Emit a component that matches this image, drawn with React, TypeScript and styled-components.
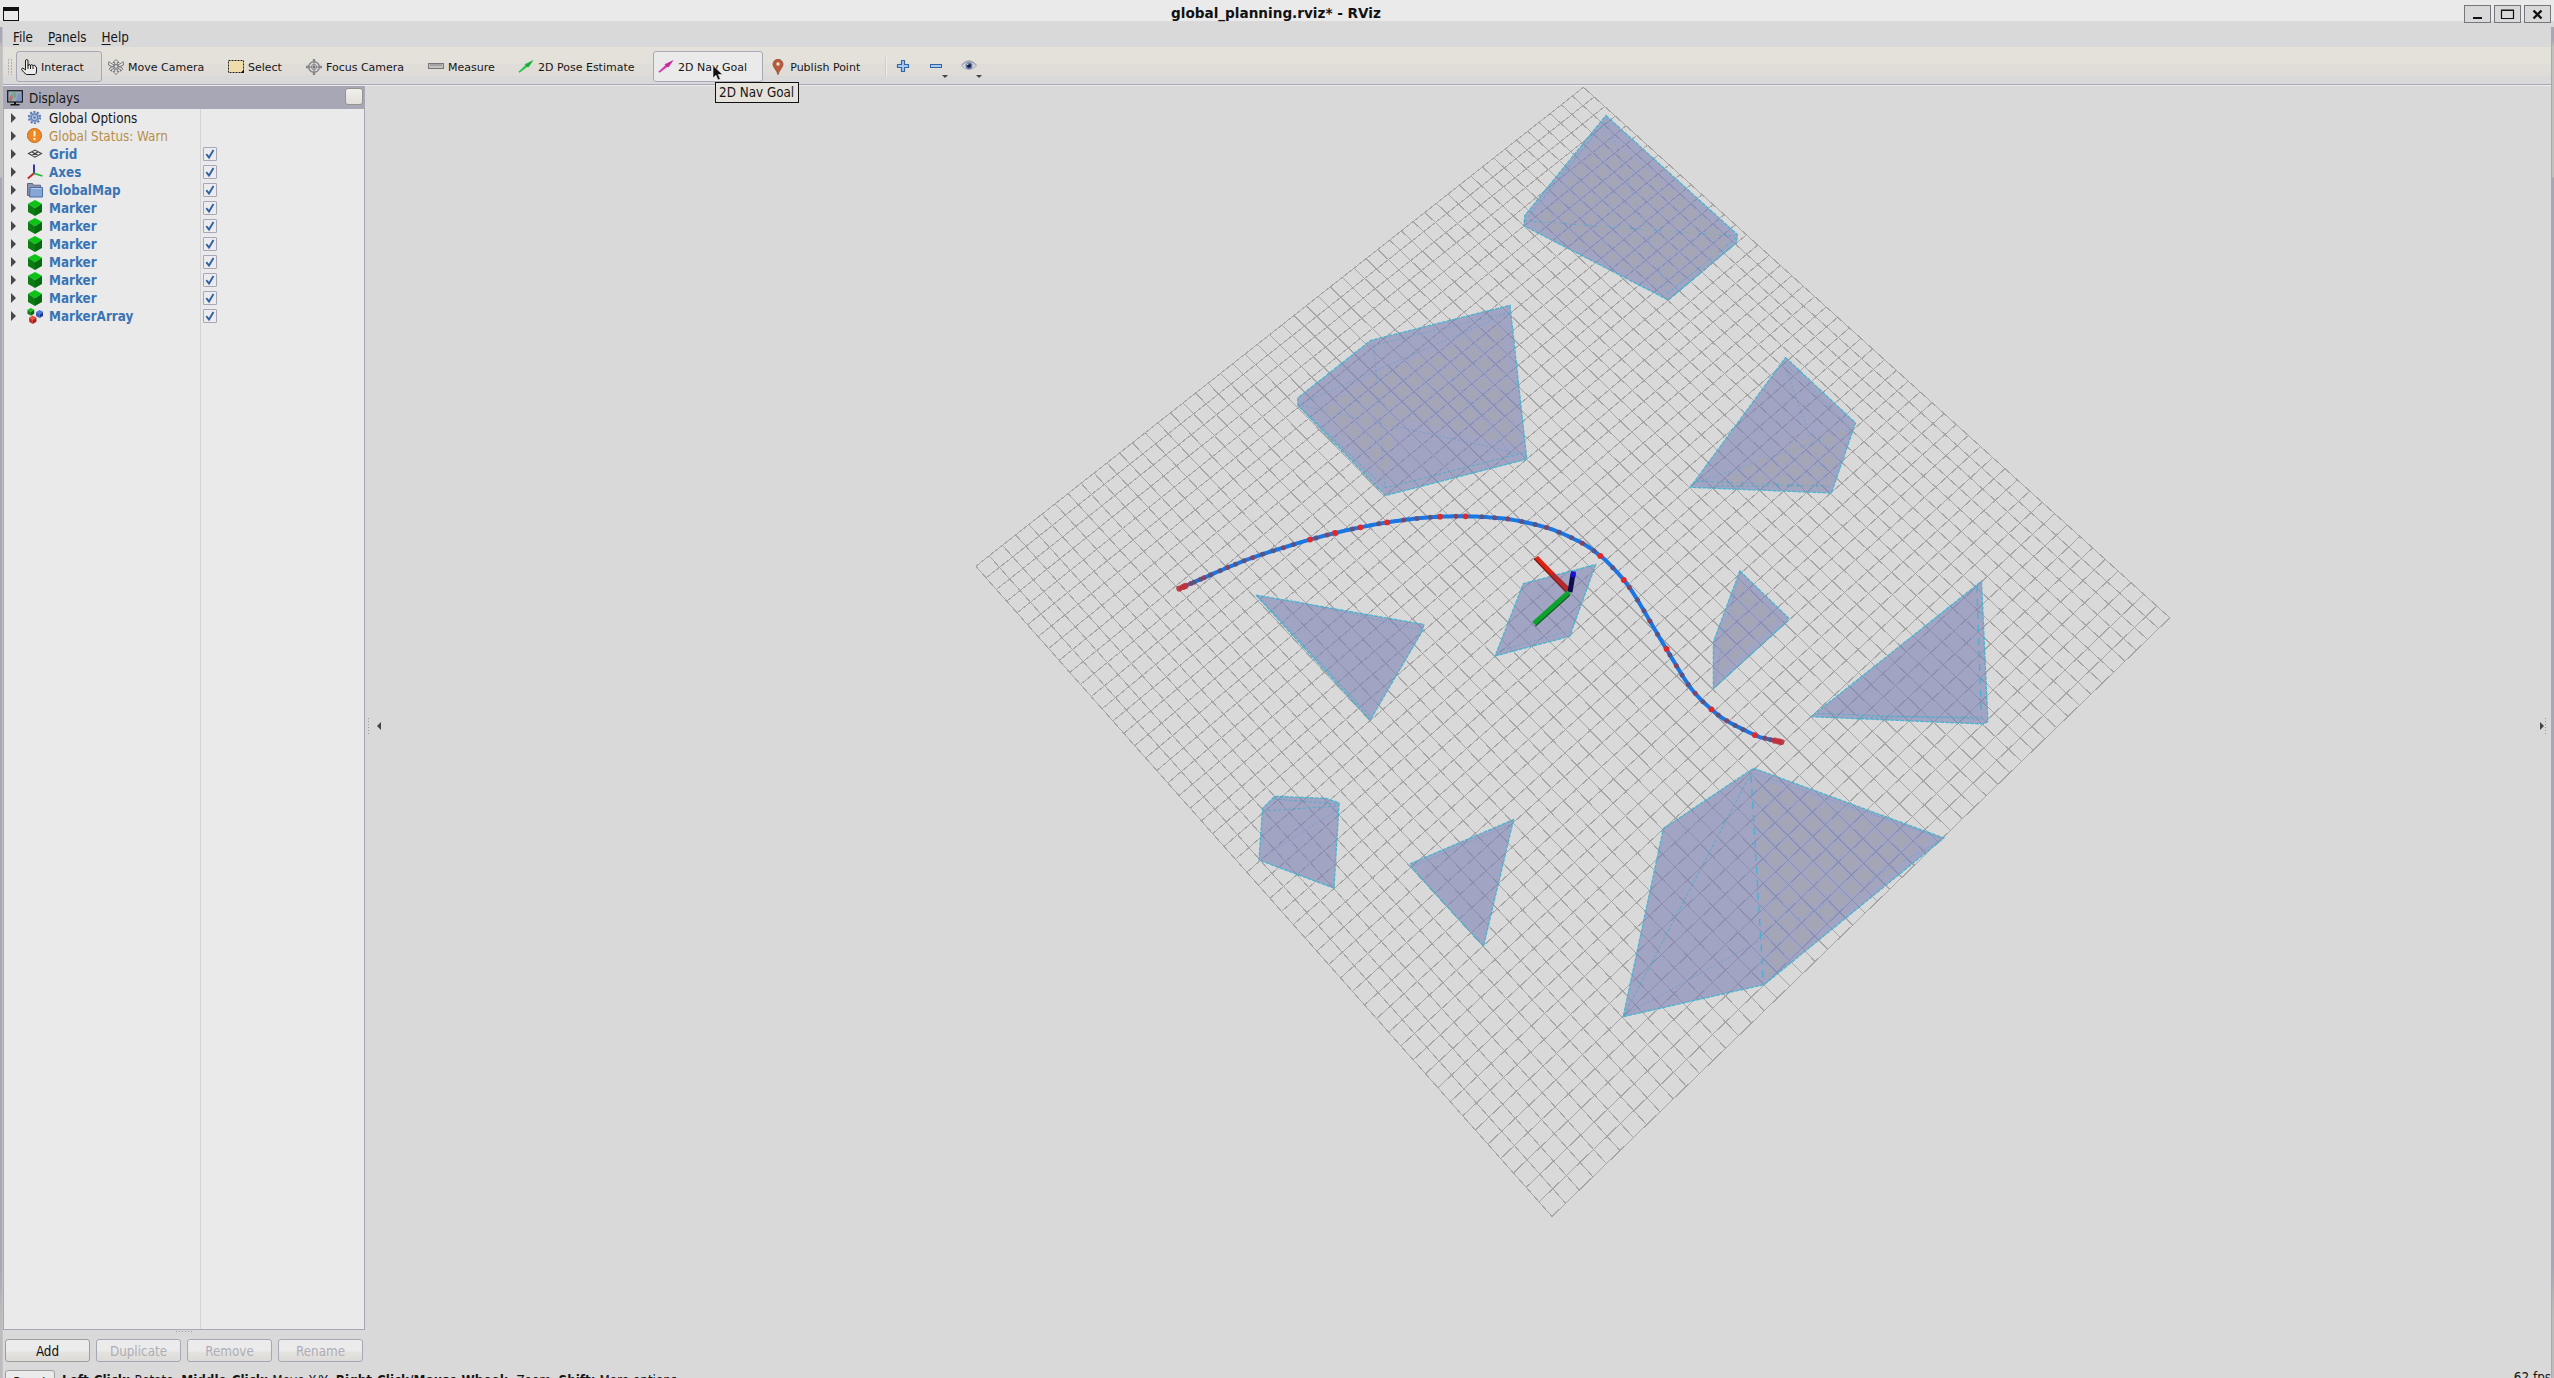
import React from 'react';
import styled, { createGlobalStyle, css } from 'styled-components';

const PURPLE = '#a8a7b5';
const BG = '#d9d9d9';
const LIGHT = '#eaeaea';

const GlobalStyle = createGlobalStyle`
  html, body { margin: 0; padding: 0; background: ${BG}; overflow: hidden; }
  * { box-sizing: border-box; }
`;

const Window = styled.div`
  position: relative;
  width: 2554px;
  height: 1378px;
  overflow: hidden;
  display: flex;
  flex-direction: column;
  background: ${BG};
  color: #161616;
  font-family: 'DejaVu Sans Condensed', 'DejaVu Sans', sans-serif;
  font-stretch: condensed;
  font-size: 13.33px;
  white-space: nowrap;
`;

const TitleBar = styled.header`
  display: grid;
  grid-template-columns: 90px 1fr 90px;
  height: 21px;
  flex: none;
  background: ${LIGHT};
`;
const TitleIcon = styled.div`
  width: 16px;
  height: 14px;
  margin: 7px 0 0 3px;
  border: 1px solid #111;
  border-top-width: 4px;
`;
const Title = styled.div`
  text-align: center;
  font-weight: bold;
  font-stretch: normal;
  font-family: 'DejaVu Sans', sans-serif;
  font-size: 13.6px;
  line-height: 26px;
  padding-right: 2px;
  color: #111;
`;
const WinButtons = styled.div`
  display: flex;
  gap: 3px;
  padding-top: 5px;
`;
const WinButton = styled.div`
  width: 27px;
  height: 18px;
  border: 1px solid #77767c;
  background: ${BG};
  display: flex;
  position: relative;
  z-index: 1;
`;

const MenuBar = styled.nav`
  display: flex;
  gap: 15px;
  height: 26px;
  flex: none;
  padding: 0 0 0 13px;
  line-height: 33px;
`;
const Menu = styled.span`
  &::first-letter {
    text-decoration: underline;
    text-underline-offset: 2px;
    text-decoration-thickness: 1px;
  }
  display: block;
`;

const ToolBar = styled.div`
  display: flex;
  align-items: flex-start;
  height: 39px;
  flex: none;
  padding: 4px 0 0 8px;
  background: linear-gradient(#e4e1da 0 16px, #e0ddd8 17px 28px, ${BG} 29px);
  border-bottom: 1px solid #ececec;
  box-shadow: inset 0 -1px 0 ${PURPLE};
  font-family: 'DejaVu Sans', sans-serif;
  font-stretch: normal;
  font-size: 11px;
`;
const Grip = styled.div`
  width: 5px;
  height: 17px;
  margin: 7px 3px 0 0;
  background: repeating-linear-gradient(#e0ddd8 0 1px, transparent 1px 3px),
    linear-gradient(90deg, #b4b2b0 1px, transparent 1px 3px, #b4b2b0 3px 4px, transparent 4px);
`;
const Tool = styled.div<{ $w: number; $state?: 'on' | 'hover' }>`
  width: ${p => p.$w}px;
  height: 31px;
  display: flex;
  align-items: center;
  gap: 4px;
  padding-left: 5px;
  flex: none;
  svg { flex: none; }
  ${p => p.$state && css`
    padding-left: 4px;
    border: 1px solid ${PURPLE};
    border-radius: 3px;
    background: ${p.$state === 'hover' ? LIGHT : 'linear-gradient(#dedcd8, #d9d9d9)'};
  `}
  ${p => p.$state === 'on' && css`margin-right: 1px;`}
  ${p => p.$state === 'hover' && css`margin-right: 4px;`}
`;
const ToolLabel = styled.span`
  padding-top: 2px;
`;
const Separator = styled.div`
  width: 2px;
  height: 20px;
  margin: 6px 9px 0 1px;
  background: linear-gradient(90deg, #cfcdc9 50%, #f0efec 50%);
`;
const SmallTool = styled.div<{ $w: number }>`
  width: ${p => p.$w}px;
  height: 31px;
  flex: none;
  padding-top: 7px;
  display: flex;
  align-items: flex-start;
`;
const DropArrow = styled.i`
  border: 3.5px solid transparent;
  border-top-color: #444;
  border-bottom: 0;
  margin: 17px 0 0 -1px;
`;

const Main = styled.main`
  display: flex;
  height: 1276px;
  flex: none;
  padding-left: 3px;
`;
const Dock = styled.section`
  width: 362px;
  flex: none;
  display: flex;
  flex-direction: column;
`;
const DockHeader = styled.div`
  height: 23px;
  flex: none;
  display: flex;
  align-items: center;
  gap: 6px;
  padding: 0 2px 0 4px;
  background: ${PURPLE};
`;
const DockTitle = styled.span`
  flex: 1;
  padding-top: 1px;
`;
const DockButton = styled.div`
  width: 18px;
  height: 17px;
  margin-bottom: 3px;
  border: 1px solid #96958c;
  border-radius: 3px;
  background: linear-gradient(#f0f0ee, #e2dfd8);
`;
const Tree = styled.div`
  height: 1221px;
  flex: none;
  background: linear-gradient(90deg, transparent 196px, #d3d3d6 196px 197px, transparent 197px) ${LIGHT};
  border: 1px solid ${PURPLE};
  border-top: 0;
`;
const Row = styled.div<{ $tone?: 'warn' | 'display' }>`
  height: 18px;
  display: flex;
  align-items: center;
  padding-left: 7px;
  color: ${p => (p.$tone === 'warn' ? '#b88d48' : p.$tone ? '#3a74b4' : '#161616')};
  font-weight: ${p => (p.$tone === 'display' ? 'bold' : 'normal')};
  svg { flex: none; }
`;
const Expander = styled.i`
  border: 5px solid transparent;
  border-left-color: #484848;
  border-right: 0;
  margin: 0 11px 0 0;
`;
const RowLabel = styled.span`
  width: 154px;
  margin-left: 6px;
  padding-top: 1px;
`;
const Check = styled.div`
  width: 14px;
  height: 14px;
  border: 1px solid ${PURPLE};
  border-radius: 1px;
  background: #ececee;
  display: flex;
`;
const Splitter = styled.div`
  height: 11px;
  display: flex;
  justify-content: center;
  align-items: flex-start;
`;
const Dots = styled.div<{ $vertical?: boolean }>`
  width: ${p => (p.$vertical ? 1 : 17)}px;
  height: ${p => (p.$vertical ? 17 : 1)}px;
  flex: none;
  margin-top: 1px;
  background: repeating-linear-gradient(${p => (p.$vertical ? '180deg' : '90deg')}, #9a9a9e 0 1px, transparent 1px 3px);
`;
const Buttons = styled.div`
  display: flex;
  gap: 6px;
  padding-left: 2px;
`;
const PushButton = styled.div<{ $disabled?: boolean; $w?: number }>`
  width: ${p => p.$w ?? 85}px;
  height: 23px;
  border: 1px solid ${p => (p.$disabled ? PURPLE : '#9f9e98')};
  border-radius: 3px;
  background: linear-gradient(#ebebeb 0 50%, #e4e2dd 60%, #dcdbda);
  color: ${p => (p.$disabled ? '#aeadb9' : '#111')};
  text-align: center;
  line-height: 23px;
  flex: none;
`;

const Handle = styled.div<{ $right?: boolean }>`
  width: 19px;
  flex: none;
  display: flex;
  align-items: center;
  gap: ${p => (p.$right ? 1 : 8)}px;
  padding: 4px 0 0 ${p => (p.$right ? 6 : 3)}px;
`;
const HandleArrow = styled.i<{ $right?: boolean }>`
  border: 4.5px solid transparent;
  ${p => (p.$right
    ? 'border-left-color: #444; border-right: 0;'
    : 'border-right-color: #444; border-left: 0;')}
`;
const Viewport = styled.div`
  width: 2150px;
  height: 1276px;
  flex: none;
  svg { display: block; }
`;
const StatusBar = styled.footer`
  display: flex;
  height: 30px;
  flex: none;
  padding: 8px 3px 0 5px;
`;
const StatusText = styled.span`
  flex: 1;
  margin-left: 7px;
  line-height: 22px;
`;
const Key = styled.b<{ $gap?: number }>`
  margin-left: ${p => p.$gap ?? 0}px;
`;
const Fps = styled.span`
  line-height: 15px;
`;
const Tooltip = styled.div`
  position: absolute;
  left: 715px;
  top: 82px;
  width: 84px;
  height: 21px;
  border: 1px solid #111;
  background: #e6e3dc;
  line-height: 20px;
  padding-left: 3px;
`;
const Cursor = styled.svg`
  position: absolute;
  left: 712px;
  top: 65px;
`;
const EdgeStrip = styled.div<{ $right?: boolean }>`
  position: absolute;
  ${p => (p.$right ? 'right: 0;' : 'left: 0;')}
  top: 27px;
  bottom: 0;
  width: 3px;
  border-${p => (p.$right ? 'left' : 'right')}: 1px solid ${p => (p.$right ? '#a8a7b5' : '#c4c4c8')};
  background: linear-gradient(#a8a7b5 0 13px, #c2c0bc 20px 150px, #a8a7b5 151px 1240px, #bdbcbc 1290px);
`;

/* ---------- icons ---------- */
const Ico = ({ children, w = 16, h = 16 }: { children: React.ReactNode; w?: number; h?: number }) => (
  <svg width={w} height={h} viewBox={`0 0 ${w} ${h}`}>{children}</svg>
);

const HandIcon = () => (
  <Ico>
    <path d="M4.5 9.500V2q0-1.500 1.200-1.500T7 2v5q0-1.500 1.200-1.500T9.500 7q0-1.300 1.200-1.300T12 7.200q.2-1 1.200-1 1.300 0 1.300 1.500l1 .5V12q0 3-1.500 3.500H5.500Q3 14 .8 10.800q-.5-1.300.7-1.500 1.500 0 3 1.700z" fill="#ededed" stroke="#1a1a1a" />
    <path d="M7 7v3M9.500 7v3M12 7.500V10" stroke="#1a1a1a" fill="none" />
  </Ico>
);
const MoveIcon = () => (
  <Ico>
    <g fill="#e4e4e4" stroke="#6c6c70" strokeWidth=".9" strokeLinejoin="round">
      <path d="M8 .5 11 3.500H9.300V6H6.700V3.500H5z" />
      <path d="M8 15.500 11 12.500H9.300V10H6.700v2.500H5z" />
      <path d="M.5 6 1 2.500 2.500 4 6 6 5 8 2 6.500z" />
      <path d="M15.500 6 15 2.500 13.500 4 10 6l1 2 3-1.500z" />
      <path d="M2 8.500l4-1v2l-2.500 1v1.700L1.500 10.500z M14 8.500l-4-1v2l2.500 1v1.700l2-1.700z" />
      <circle cx="8" cy="7.500" r="1.800" />
    </g>
  </Ico>
);
const SelectIcon = () => (
  <Ico>
    <rect x=".5" y="1.500" width="15" height="12" fill="#f0dcaa" stroke="#222" strokeDasharray="2 1" />
    <path d="M16 10.500V14h-3.500z" fill="#111" />
  </Ico>
);
const FocusIcon = () => (
  <Ico>
    <g fill="none" stroke="#85858a">
      <circle cx="8" cy="8" r="5.300" strokeWidth="1.500" />
      <circle cx="8" cy="8" r="2.600" />
      <path d="M8 3v10M3 8h10" />
      <path d="M8 0v3.500M8 12.500V16M0 8h3.500M12.500 8H16" strokeWidth="2.400" />
    </g>
    <circle cx="8" cy="8" r="1" fill="#66666a" />
  </Ico>
);
const RulerIcon = () => (
  <Ico>
    <rect x=".5" y="4.500" width="15" height="5" fill="#c2c1be" stroke="#77767a" />
    <path d="M3 5v2M5 5v2M7 5v2M9 5v2M11 5v2M13 5v2" stroke="#77767a" strokeWidth=".8" />
  </Ico>
);
const ArrowIcon = ({ c, d }: { c: string; d: string }) => (
  <Ico>
    <path d="M.3 12.800 7.300 6.300 6.500 5.300 15.500 1 10.800 8.300 9.300 8 1.600 13.800z" fill={c} />
    <path d="M7.300 6.300 15.500 1 9.500 8z" fill={d} opacity=".6" />
  </Ico>
);
const PinIcon = () => (
  <Ico w={12}>
    <path d="M6 .3a5 5 0 0 1 5 5C11 8.500 7.500 10.500 6 15.700 4.500 10.500 1 8.500 1 5.300a5 5 0 0 1 5-5z" fill="#b95a38" stroke="#8c4126" strokeWidth=".7" />
    <circle cx="6" cy="5" r="1.700" fill="#eee4dc" />
  </Ico>
);
const PlusIcon = () => (
  <Ico>
    <path d="M5.500 2.500h3v4h4v3h-4v4h-3v-4h-4v-3h4z" fill="#a9c7ea" stroke="#2f64a6" strokeWidth="1.200" strokeLinejoin="round" />
  </Ico>
);
const MinusIcon = () => (
  <Ico w={14}><rect x="1.500" y="6.500" width="11" height="3" fill="#a9c7ea" stroke="#2f64a6" /></Ico>
);
const EyeIcon = () => (
  <Ico>
    <path d="M.5 8Q8-1 15.500 8 8 15 .5 8z" fill="#d3d5de" stroke="#a5a7b6" strokeWidth=".8" />
    <path d="M.5 7Q8-1.500 15.500 7" fill="none" stroke="#94949f" />
    <circle cx="8" cy="7.800" r="3.500" fill="#6677a8" />
    <circle cx="8" cy="7.800" r="2" fill="#14183c" />
    <circle cx="6.800" cy="6.300" r=".8" fill="#fff" />
  </Ico>
);
const MonitorIcon = () => (
  <Ico>
    <rect x=".7" y=".7" width="14.600" height="11.300" fill="#98a8b8" stroke="#161616" strokeWidth="1.200" />
    <path d="M1.500 10 5 3.500 6 8 4 11z" fill="#b9706e" />
    <path d="M6 3 8 1.500 9.500 6 7 9z" fill="#68ac79" />
    <path d="M9 11 11 3l3.500 2v6z" fill="#8392c6" />
    <path d="M7 12h2v2h3.500v1.500h-9V14H7z" fill="#161616" />
  </Ico>
);
const GearIcon = () => (
  <Ico>
    <circle cx="7.500" cy="7.500" r="5" fill="#86a0cf" />
    <circle cx="7.500" cy="7.500" r="5.700" fill="none" stroke="#5876ae" strokeWidth="1.800" strokeDasharray="2 1.580" />
    <circle cx="7.500" cy="7.500" r="3.200" fill="#bccae4" stroke="#5876ae" />
    <circle cx="7.500" cy="7.500" r="1.300" fill="#5876ae" />
  </Ico>
);
const WarnIcon = () => (
  <Ico>
    <circle cx="7.500" cy="7.500" r="7.100" fill="#ef8722" stroke="#c36a1c" strokeWidth=".9" />
    <path d="M7.500 3v5.500" stroke="#fff2dc" strokeWidth="2" />
    <circle cx="7.500" cy="11" r="1.200" fill="#fff2dc" />
  </Ico>
);
const GridIcon = () => (
  <Ico>
    <path d="M1.500 7.500 8 4l6.500 3.500L8 11.200zM4.700 5.800l6.500 3.600M11.300 5.800 4.700 9.400" fill="none" stroke="#3f3f3f" strokeWidth="1.100" />
  </Ico>
);
const AxesIcon = () => (
  <Ico>
    <path d="M7 9V.5" stroke="#22229c" strokeWidth="1.800" />
    <path d="M7 9.300 15.500 12" stroke="#2bb53c" strokeWidth="1.800" />
    <path d="M7 9.300.8 14.500" stroke="#c12b2b" strokeWidth="2" />
  </Ico>
);
const FolderIcon = () => (
  <Ico>
    <path d="M.5 13.500V1.500h5l1 1.700h7V14z" fill="#8c93ab" stroke="#5e6684" />
    <path d="M2.500 15 3 5.500h12.500V15z" fill="#86a7d4" stroke="#4a6ea8" />
    <path d="M4 6.500h10.500" stroke="#b5cbe8" />
  </Ico>
);
const Cube = ({ x = 0, y = 0, s = 1, c }: { x?: number; y?: number; s?: number; c: string[] }) => (
  <g transform={`translate(${x} ${y}) scale(${s})`}>
    <path d="M8 0 15 3.800 8 8.300 1 3.800z" fill={c[0]} />
    <path d="M1 3.800 8 8.300V16L1 12z" fill={c[1]} />
    <path d="M15 3.800 8 8.300V16l7-4z" fill={c[2]} />
  </g>
);
const GREEN = ['#0cc416', '#0a7c12', '#076a0e'];
const MarkerIcon = () => <Ico><Cube c={GREEN} /></Ico>;
const MarkerArrayIcon = () => (
  <Ico>
    <Cube s={0.48} c={GREEN} />
    <Cube x={8.6} y={2} s={0.5} c={['#4a78e0', '#2b52b8', '#1c3c98']} />
    <Cube x={1.6} y={7.6} s={0.52} c={['#ec5240', '#c92c22', '#a51d18']} />
  </Ico>
);
const Tick = () => (
  <svg width="12" height="12" viewBox="0 0 12 12">
    <path d="M2.300 6.200 5 9.500 9.500 2" fill="none" stroke="#2f62a4" strokeWidth="1.900" />
  </svg>
);

/* ---------- 3D scene ---------- */
type P = [number, number];
const CELLS = 50;
const CORNERS: P[] = [[1583.5, 87.3], [2169.8, 617.8], [1552, 1216.5], [975.8, 566.3]];

function projector([a, b, c, d]: P[]) {
  const dx1 = b[0] - c[0], dx2 = d[0] - c[0], sx = a[0] - b[0] + c[0] - d[0];
  const dy1 = b[1] - c[1], dy2 = d[1] - c[1], sy = a[1] - b[1] + c[1] - d[1];
  const det = dx1 * dy2 - dx2 * dy1;
  const g = (sx * dy2 - dx2 * sy) / det;
  const h = (dx1 * sy - sx * dy1) / det;
  return (u: number, v: number): P => {
    const w = g * u + h * v + 1;
    return [
      ((b[0] - a[0] + g * b[0]) * u + (d[0] - a[0] + h * d[0]) * v + a[0]) / w,
      ((b[1] - a[1] + g * b[1]) * u + (d[1] - a[1] + h * d[1]) * v + a[1]) / w,
    ];
  };
}
const project = projector(CORNERS);
const pt = (p: P) => `${p[0].toFixed(1)} ${p[1].toFixed(1)}`;
const steps = Array.from({ length: CELLS + 1 }, (_, i) => i / CELLS);
const gridPath = steps
  .map(t => `M${pt(project(t, 0))}L${pt(project(t, 1))}M${pt(project(0, t))}L${pt(project(1, t))}`)
  .join('');
const cellPath = steps.slice(0, -1).flatMap(u => steps.slice(0, -1).map(v => {
  const m = 0.15 / CELLS, e = 0.85 / CELLS;
  return `M${pt(project(u + m, v + m))}L${pt(project(u + e, v + m))}L${pt(project(u + e, v + e))}L${pt(project(u + m, v + e))}z`;
})).join('');

const obstacles = [
  { hull: '1605.9,115.5 1737.5,234.7 1736.5,242.4 1668.2,300 1523.8,225.7 1524.8,215.5', inner: 'M1524 220.800 1735 236M1605 122 1528 217M1736 238 1668 293', soft: 'M1606 118 1668 295' },
  { hull: '1510,305.3 1526.8,459.2 1385.5,495.5 1297.8,405.3 1297.8,398 1370.7,340.4', inner: 'M1298 405 1385 488 1526 452', soft: 'M1298 405 1526 455M1374 346 1385 489M1371 346 1510 312M1298 405 1510 312M1439 361 1513 457' },
  { hull: '1785.6,357.6 1855.5,422.9 1831.4,493 1690.3,487.3', inner: 'M1696 481 1831 486.500M1716 486H1820', soft: 'M1785 367 1829 488M1690 485 1850 430M1785 363 1850 427' },
  { hull: '1595.7,564.5 1569.7,636.3 1495.2,655.9 1523.3,583.7', inner: '', soft: 'M1499 651 1569 631' },
  { hull: '1255.9,595.1 1423.8,624.5 1422.8,630.2 1370.2,720', inner: 'M1262 600 1370 716', soft: 'M1286 599 1421 630' },
  { hull: '1739.9,571 1788.5,618 1787.5,621 1713.4,688.6 1713.4,642', inner: '', soft: 'M1738 582 1724 631 1715 684' },
  { hull: '1981.5,581.2 1987.9,721.600 1983.5,724 1811.2,716.7', inner: 'M1817 713.500 1984 719M1860 717H1980', soft: '', dash: 'M1976.800 586 1981.500 718' },
  { hull: '1753.6,768.2 1943.8,838 1764.3,984.5 1623.2,1016.7 1663.4,828.6', inner: 'M1750.900 773.500 1623.200 1016.700', soft: 'M1753 773 1940 838M1623 1016 1940 841', dash: 'M1751 776 1763.400 984' },
  { hull: '1274.8,796.3 1326.3,798.4 1339.1,802.9 1334,888.2 1259,860 1262.5,808.6', inner: 'M1263 811 1338 806M1274 799 1337 804', soft: 'M1268 854 1337 810' },
  { hull: '1513.6,819.6 1483.5,946.1 1410.5,866.1 1410.5,863.7', inner: '', soft: 'M1412 867 1512 824' },
];
const greyRegions = [
  '1603,135 1727,234 1725,250 1667,290 1535,224 1590,150',
  '1440,350 1500,320 1518,445 1400,418 1385,480 1320,412 1380,372',
  '1800,440 1846,430 1828,489 1710,484',
  '1738,582 1779,618 1718,675 1722,632',
  '1755,778 1930,838 1766,978',
];

const curve: P[] = [
  [1179.4, 588.6], [1225.3, 568.5], [1254.4, 557], [1287, 546.5], [1310, 539.6], [1335, 533],
  [1360.5, 527.3], [1387, 522.4], [1413.6, 518.8], [1440, 516.7], [1465.6, 516.3], [1491.6, 517.5],
  [1516, 520.4], [1550.8, 529], [1582.4, 543.3], [1600.3, 555.9], [1608.5, 563.2], [1623.8, 580],
  [1637.5, 600], [1660.5, 639.2], [1684.5, 678.8], [1696.7, 695.1], [1711.5, 709.4], [1726.8, 720.8],
  [1754.9, 735.1], [1767, 738.8], [1781.3, 742],
];
const samples: P[] = [];
for (let i = 0; i < curve.length - 1; i++) {
  const p0 = curve[Math.max(i - 1, 0)], p1 = curve[i], p2 = curve[i + 1], p3 = curve[Math.min(i + 2, curve.length - 1)];
  for (let k = 0; k < 16; k++) {
    const t = k / 16;
    samples.push([0, 1].map(j =>
      0.5 * (2 * p1[j] + (p2[j] - p0[j]) * t + (2 * p0[j] - 5 * p1[j] + 4 * p2[j] - p3[j]) * t * t
        + (3 * p1[j] - p0[j] - 3 * p2[j] + p3[j]) * t * t * t)) as P);
  }
}
samples.push(curve[curve.length - 1]);
const curvePath = 'M' + samples.map(pt).join('L');
const lengths = samples.reduce<number[]>((acc, p, i) => {
  acc.push(i ? acc[i - 1] + Math.hypot(p[0] - samples[i - 1][0], p[1] - samples[i - 1][1]) : 0);
  return acc;
}, []);
const total = lengths[lengths.length - 1];
const at = (s: number) => samples[Math.max(0, lengths.findIndex(l => l >= s))];
const bright: P[] = [
  [1310, 539.6], [1335, 533], [1360.5, 527.3], [1387, 522.4], [1440, 516.7], [1465.6, 516.3],
  [1600.3, 555.9], [1623.8, 580], [1666.6, 649], [1711.5, 709.4], [1754.9, 735.1],
];
const waypoints: { p: P; end: boolean }[] = [];
for (let s = 0; s < total;) {
  const edge = Math.min(s, total - s);
  const p = at(s);
  if (bright.every(b => Math.hypot(b[0] - p[0], b[1] - p[1]) > 6)) waypoints.push({ p, end: edge < 9 });
  s += edge < 40 ? 3 + edge * 0.15 : Math.min(13.1, 9 + (edge - 40) * 0.03);
}
waypoints.push({ p: curve[curve.length - 1], end: true });

const Scene = () => (
  <svg width="2150" height="1276" viewBox="384 86 2150 1276">
    <defs>
      <clipPath id="mottled">
        {greyRegions.map(r => <polygon key={r} points={r} />)}
      </clipPath>
    </defs>
    <path d={gridPath} fill="none" stroke="#a6a6a6" strokeWidth="1" shapeRendering="crispEdges" />
    {obstacles.map(o => (
      <g key={o.hull} fill="none">
        <polygon points={o.hull} fill="#7b80b2" fillOpacity=".6" />
        <polygon points={o.hull} stroke="#48b2d0" strokeWidth="1.300" strokeDasharray="4 1" strokeOpacity=".95" />
        <path d={o.inner} stroke="#48abc8" strokeDasharray="3 2" strokeOpacity=".85" />
        <path d={o.soft} stroke="#6a9fcc" strokeDasharray="2 2" strokeOpacity=".75" />
        {o.dash && <path d={o.dash} stroke="#48b0ce" strokeWidth="1.300" strokeDasharray="7 6" />}
      </g>
    ))}
    <path d={cellPath} fill="#a7a7b0" fillOpacity=".75" clipPath="url(#mottled)" />
    <path d={curvePath} fill="none" stroke="#1b76e2" strokeWidth="4" />
    {waypoints.map(({ p, end }, i) => (
      <circle key={i} cx={p[0]} cy={p[1]} r={end ? 3.1 : 2.5} fill={end ? '#c23038' : i % 3 ? '#5f5078' : '#8c4058'} fillOpacity=".9" />
    ))}
    {bright.map(p => <circle key={p[0]} cx={p[0]} cy={p[1]} r="2.900" fill="#dc2a2c" />)}
    <g strokeWidth="5">
      <path d="M1536 557.500 1554 576" stroke="#dc2412" />
      <path d="M1552 574 1568.500 590" stroke="#b32a30" />
      <path d="M1534 558.500 1566 592" stroke="#7d1712" strokeWidth="1.200" />
      <path d="M1573 574 1570 592" stroke="#0e0d4e" />
      <path d="M1573.500 571.500 1573 577" stroke="#1313dc" />
      <path d="M1534 623.500 1569 592" stroke="#0ca22c" />
      <path d="M1535.500 626 1570 595" stroke="#0a5a1c" strokeWidth="1.200" />
    </g>
  </svg>
);

const rows: { label: string; icon: React.ReactNode; tone?: 'warn' | 'display' }[] = [
  { label: 'Global Options', icon: <GearIcon /> },
  { label: 'Global Status: Warn', icon: <WarnIcon />, tone: 'warn' },
  { label: 'Grid', icon: <GridIcon />, tone: 'display' },
  { label: 'Axes', icon: <AxesIcon />, tone: 'display' },
  { label: 'GlobalMap', icon: <FolderIcon />, tone: 'display' },
  ...Array.from({ length: 6 }, () => ({ label: 'Marker', icon: <MarkerIcon />, tone: 'display' as const })),
  { label: 'MarkerArray', icon: <MarkerArrayIcon />, tone: 'display' },
];

export default function App() {
  return (
    <Window>
      <GlobalStyle />
      <TitleBar>
        <TitleIcon />
        <Title>global_planning.rviz* - RViz</Title>
        <WinButtons>
          <WinButton><svg width="25" height="16"><path d="M8 12h9" stroke="#111" strokeWidth="2" /></svg></WinButton>
          <WinButton><svg width="25" height="16"><path d="M6.500 4.500h12v8h-12zM6 4h13" fill="none" stroke="#111" strokeWidth="1.200" /></svg></WinButton>
          <WinButton><svg width="25" height="16"><path d="M8.500 4.500l8 8M16.500 4.500l-8 8" stroke="#111" strokeWidth="2.400" /></svg></WinButton>
        </WinButtons>
      </TitleBar>
      <MenuBar>
        <Menu>File</Menu>
        <Menu>Panels</Menu>
        <Menu>Help</Menu>
      </MenuBar>
      <ToolBar>
        <Grip />
        <Tool $w={86} $state="on"><HandIcon /><ToolLabel>Interact</ToolLabel></Tool>
        <Tool $w={120}><MoveIcon /><ToolLabel>Move Camera</ToolLabel></Tool>
        <Tool $w={78}><SelectIcon /><ToolLabel>Select</ToolLabel></Tool>
        <Tool $w={122}><FocusIcon /><ToolLabel>Focus Camera</ToolLabel></Tool>
        <Tool $w={90}><RulerIcon /><ToolLabel>Measure</ToolLabel></Tool>
        <Tool $w={140}><ArrowIcon c="#2cc64c" d="#1b8c36" /><ToolLabel>2D Pose Estimate</ToolLabel></Tool>
        <Tool $w={110} $state="hover"><ArrowIcon c="#d63cae" d="#a02886" /><ToolLabel>2D Nav Goal</ToolLabel></Tool>
        <Tool $w={117}><PinIcon /><ToolLabel>&thinsp;Publish Point</ToolLabel></Tool>
        <Separator />
        <SmallTool $w={33}><PlusIcon /></SmallTool>
        <SmallTool $w={32}><MinusIcon /><DropArrow /></SmallTool>
        <SmallTool $w={30}><EyeIcon /><DropArrow /></SmallTool>
      </ToolBar>
      <Main>
        <Dock>
          <DockHeader>
            <MonitorIcon />
            <DockTitle>Displays</DockTitle>
            <DockButton />
          </DockHeader>
          <Tree>
            {rows.map((r, i) => (
              <Row key={i} $tone={r.tone}>
                <Expander />
                {r.icon}
                <RowLabel>{r.label}</RowLabel>
                {r.tone === 'display' && <Check><Tick /></Check>}
              </Row>
            ))}
          </Tree>
          <Splitter><Dots /></Splitter>
          <Buttons>
            <PushButton>Add</PushButton>
            <PushButton $disabled>Duplicate</PushButton>
            <PushButton $disabled>Remove</PushButton>
            <PushButton $disabled>Rename</PushButton>
          </Buttons>
        </Dock>
        <Handle><Dots $vertical /><HandleArrow /></Handle>
        <Viewport><Scene /></Viewport>
        <Handle $right><HandleArrow $right /><Dots $vertical /></Handle>
      </Main>
      <StatusBar>
        <PushButton $w={50}>Reset</PushButton>
        <StatusText>
          <Key>Left-Click:</Key> Rotate. <Key>Middle-Click:</Key> Move X/Y. <Key $gap={3}>Right-Click/Mouse Wheel:</Key>: Zoom. <Key>Shift:</Key> More options.
        </StatusText>
        <Fps>62 fps</Fps>
      </StatusBar>
      <EdgeStrip />
      <EdgeStrip $right />
      <Tooltip>2D Nav Goal</Tooltip>
      <Cursor width="12" height="16" viewBox="0 0 12 16">
        <path d="M1 .5V13l3-2.800L6 15l2.300-1L6.300 9.500h4.200z" fill="#111" stroke="#eee" strokeWidth=".6" />
      </Cursor>
    </Window>
  );
}
